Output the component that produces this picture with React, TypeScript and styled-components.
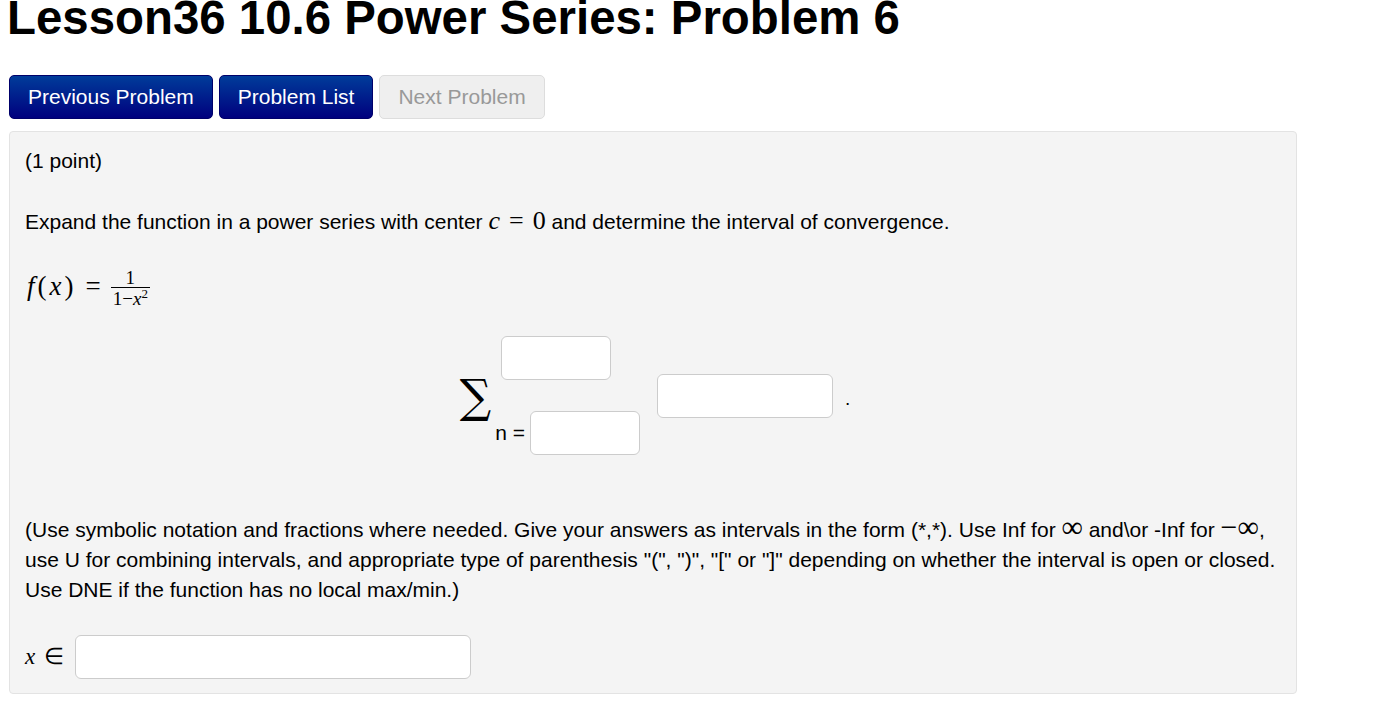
import styled, { createGlobalStyle } from "styled-components";

const GlobalStyle = createGlobalStyle`
  body {
    margin: 0;
    background: #ffffff;
    font-family: "Liberation Sans", Arial, sans-serif;
    color: #000000;
  }
`;

export default function App() {
  return (
    <>
      <GlobalStyle />
      <Page>
        <Title>Lesson36 10.6 Power Series: Problem 6</Title>

        <NavRow>
          <NavButton>Previous Problem</NavButton>
          <NavButton>Problem List</NavButton>
          <NavButton $disabled>Next Problem</NavButton>
        </NavRow>

        <ProblemBox>
          <Line>(1 point)</Line>

          <Line $top={30}>
            Expand the function in a power series with center{" "}
            <MathInline>
              <Var>c</Var>
              <Rel>=</Rel>0
            </MathInline>{" "}
            and determine the interval of convergence.
          </Line>

          <FormulaRow>
            <MathBig>
              <Var>f</Var>
              <Paren>(</Paren>
              <Var>x</Var>
              <Paren>)</Paren>
              <Rel>=</Rel>
            </MathBig>
            <Fraction>
              <Numer>1</Numer>
              <Denom>
                1−<Var>x</Var>
                <sup>2</sup>
              </Denom>
            </Fraction>
          </FormulaRow>

          <SumBlock>
            <Sigma>∑</Sigma>
            <Limits>
              <UpperLimit>
                <AnswerInput $width={110} />
              </UpperLimit>
              <LowerLimit>
                <span>n =</span>
                <AnswerInput $width={110} />
              </LowerLimit>
            </Limits>
            <AnswerInput $width={176} />
            <Period>.</Period>
          </SumBlock>

          <Instructions>
            (Use symbolic notation and fractions where needed. Give your answers as
            intervals in the form (*,*). Use Inf for <Inf>∞</Inf> and\or -Inf for{" "}
            <Inf>−∞</Inf>,
            <br />
            use U for combining intervals, and appropriate type of parenthesis "(",
            ")", "[" or "]" depending on whether the interval is open or closed.
            <br />
            Use DNE if the function has no local max/min.)
          </Instructions>

          <IntervalRow>
            <MathBig $size={23}>
              <Var>x</Var>
              <Rel $space={9} $right={0}>∈</Rel>
            </MathBig>
            <AnswerInput $width={396} />
          </IntervalRow>
        </ProblemBox>
      </Page>
    </>
  );
}

const Page = styled.div`
  padding: 0 9px;
`;

const Title = styled.h1`
  margin: -2px 0 0 -2px;
  font-size: 47.4px;
  line-height: 40px;
  font-weight: 700;
  color: #000000;
  white-space: nowrap;
`;

const NavRow = styled.div`
  display: flex;
  gap: 6px;
  margin-top: 37px;
`;

const NavButton = styled.button<{ $disabled?: boolean }>`
  height: 44px;
  padding: 0 18px;
  font-family: "Liberation Sans", Arial, sans-serif;
  font-size: 21px;
  border-radius: 5px;
  border: 1px solid ${(p) => (p.$disabled ? "#dddddd" : "#00006a")};
  color: ${(p) => (p.$disabled ? "#999999" : "#ffffff")};
  background: ${(p) =>
    p.$disabled ? "#efefef" : "linear-gradient(#003c9a, #00007e)"};
  cursor: ${(p) => (p.$disabled ? "default" : "pointer")};
`;

const ProblemBox = styled.div`
  margin-top: 12px;
  width: 1288px;
  box-sizing: border-box;
  padding: 14px 15px 14px 15px;
  background: #f4f4f4;
  border: 1px solid #e3e3e3;
  border-radius: 4px;
  font-size: 21px;
  line-height: 30px;
`;

const Line = styled.div<{ $top?: number }>`
  margin-top: ${(p) => p.$top ?? 0}px;
`;

const MathInline = styled.span`
  font-family: "Liberation Serif", "Times New Roman", serif;
  font-size: 26px;
`;

const Var = styled.i`
  font-family: "Liberation Serif", "Times New Roman", serif;
  font-style: italic;
`;

const Rel = styled.span<{ $space?: number; $right?: number }>`
  margin-left: ${(p) => p.$space ?? 9}px;
  margin-right: ${(p) => p.$right ?? p.$space ?? 9}px;
`;

const Paren = styled.span`
  margin: 0 3px;
`;

const MathBig = styled.span<{ $size?: number }>`
  font-family: "Liberation Serif", "Times New Roman", serif;
  font-size: ${(p) => p.$size ?? 27}px;
  white-space: pre;
  display: inline-flex;
  align-items: baseline;
`;

const FormulaRow = styled.div`
  display: flex;
  align-items: center;
  gap: 1px;
  margin-top: 30px;
  height: 38px;
  padding-left: 2px;
`;

const Fraction = styled.span`
  display: inline-flex;
  flex-direction: column;
  align-items: center;
  font-family: "Liberation Serif", "Times New Roman", serif;
  font-size: 19px;
  line-height: 15px;
  margin-top: 4px;
`;

const Numer = styled.span`
  padding: 0 2px 2px;
  border-bottom: 1px solid #000000;
  align-self: stretch;
  text-align: center;
`;

const Denom = styled.span`
  padding: 3px 2px 0;
  sup {
    font-size: 13px;
    line-height: 0;
  }
`;

const SumBlock = styled.div`
  display: flex;
  align-items: center;
  justify-content: center;
  margin-top: 31px;
  padding-left: 4px;
`;

const Sigma = styled.span`
  font-family: "DejaVu Serif", "Liberation Serif", serif;
  font-size: 44px;
  line-height: 44px;
  margin-right: 4px;
  transform: scaleY(1.05);
`;

const Limits = styled.div`
  display: flex;
  flex-direction: column;
  gap: 31px;
  margin-right: 17px;
`;

const UpperLimit = styled.div`
  padding-left: 6px;
`;

const LowerLimit = styled.div`
  display: flex;
  align-items: center;
  gap: 5px;
  font-size: 21px;
`;

const AnswerInput = styled.input.attrs({ type: "text" })<{ $width: number }>`
  width: ${(p) => p.$width}px;
  height: 44px;
  box-sizing: border-box;
  border: 1px solid #cccccc;
  border-radius: 6px;
  background: #ffffff;
  padding: 4px 8px;
  font-size: 19px;
  font-family: "Liberation Sans", Arial, sans-serif;
`;

const Period = styled.span`
  margin-left: 12px;
  margin-top: 6px;
  font-size: 19px;
`;

const Instructions = styled.p`
  margin: 60px 0 0;
`;

const Inf = styled.span`
  font-family: "Liberation Serif", "Times New Roman", serif;
  font-size: 30px;
  line-height: 20px;
`;

const IntervalRow = styled.div`
  display: flex;
  align-items: center;
  gap: 11px;
  margin-top: 30px;
`;
